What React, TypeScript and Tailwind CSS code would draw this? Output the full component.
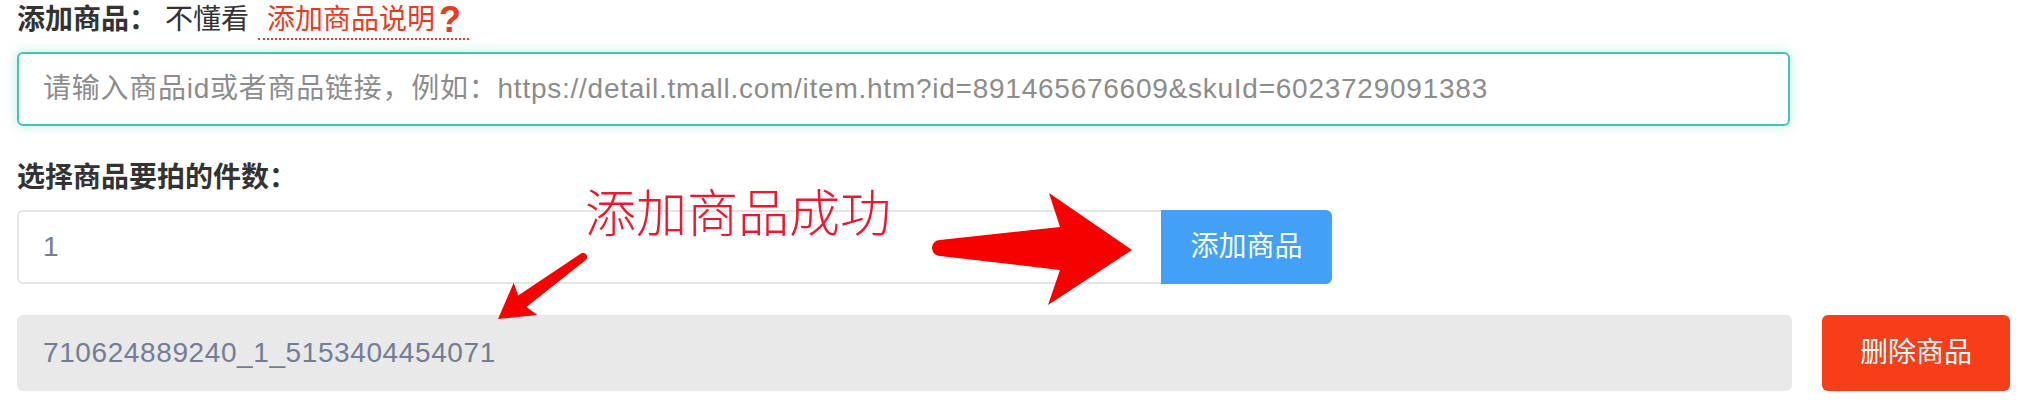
import React from "react";

const FONT = "font-['Liberation_Sans','Noto_Sans_CJK_SC',sans-serif]";

export default function App() {
  return (
    <div className={`relative w-[2044px] h-[404px] bg-white overflow-hidden ${FONT}`}>
      <div className="pl-[17px] pr-[34px]">
        {/* Row 1: label */}
        <div className="flex items-start h-[40px] text-[28px] leading-[40px]">
          <span className="font-bold text-[#333333]">添加商品：</span>
          <span className="ml-[8px] text-[#333333]">不懂看</span>
          <span className="ml-[9px] flex items-center h-[40px] pl-[9px] pr-[8px] text-[#ee3a1c] border-b-2 border-dotted border-[#ee3a1c] leading-[34px] pt-[1px]">
            添加商品说明<span className="ml-[4px] font-bold text-[36px] leading-[34px]">?</span>
          </span>
        </div>

        {/* Input 1 */}
        <input
          className="mt-[12px] block h-[74px] w-[1773px] rounded-[6px] border-2 border-[#3fc6ae] bg-white pl-[24px] text-[28px] tracking-[0.75px] text-[#333] outline-none shadow-[0_0_12px_rgba(63,198,174,0.35)] placeholder:text-[#8c8c8c]"
          placeholder="请输入商品id或者商品链接，例如：https://detail.tmall.com/item.htm?id=891465676609&skuId=6023729091383"
        />

        {/* Label 2 */}
        <div className="mt-[32px] h-[40px] text-[28px] leading-[40px] font-bold text-[#333333]">
          选择商品要拍的件数：
        </div>

        {/* Row 2 */}
        <div className="mt-[12px] flex h-[74px]">
          <input
            className="h-full w-[1144px] rounded-l-[6px] border-2 border-r-0 border-[#e4e4e4] bg-white pl-[24px] text-[28px] text-[#737d95] outline-none"
            defaultValue="1"
          />
          <button className="h-full w-[171px] rounded-r-[6px] bg-[#42a1f6] text-[28px] text-white">
            添加商品
          </button>
        </div>

        {/* Row 3 */}
        <div className="mt-[31px] flex h-[76px]">
          <div className="flex flex-1 items-center rounded-[6px] bg-[#e9e9e9] pl-[26px] text-[28px] tracking-[0.6px] text-[#737d95]">
            710624889240_1_5153404454071
          </div>
          <button className="ml-[30px] h-full w-[188px] rounded-[6px] bg-[#f73e18] text-[28px] text-white">
            删除商品
          </button>
        </div>
      </div>

      {/* Annotation overlay */}
      <span className="absolute left-[585px] top-[189px] text-[51px] leading-[51px] font-light text-[#f2152e] whitespace-nowrap">
        添加商品成功
      </span>
      <svg
        className="pointer-events-none absolute left-0 top-0"
        width="2044"
        height="404"
        viewBox="0 0 2044 404"
      >
        <path
          d="M 940 240 L 1060 227 L 1049 193 L 1132 250 L 1048 305 L 1060 270 L 940 256 A 8 8 0 0 1 940 240 Z"
          fill="#f70000"
        />
        <path
          d="M 498 319 L 537.3 315.1 L 526.4 307 L 585.4 260.2 A 4 4 0 0 0 580.6 253.8 L 518.2 295.6 L 513.7 282.7 Z"
          fill="#f70000"
        />
      </svg>
    </div>
  );
}
